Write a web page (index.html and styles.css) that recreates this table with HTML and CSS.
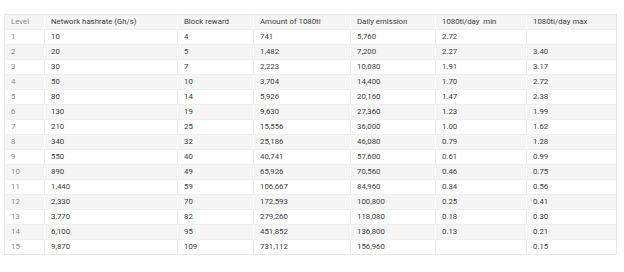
FILE: index.html
```html
<html>
<head>
	<title>Mining levels</title>
	<meta http-equiv="Content-Type" content="text/html; charset=UTF-8">
	<link rel="stylesheet" href="styles.css">
</head>
<body>
	<table class="levels">
		<colgroup>
			<col class="c-level">
			<col class="c-hash">
			<col class="c-reward">
			<col class="c-amount">
			<col class="c-daily">
			<col class="c-min">
			<col class="c-max">
		</colgroup>
		<thead>
			<tr>
				<th class="level">Level</th>
				<th>Network hashrate (Gh/s)</th>
				<th>Block reward</th>
				<th>Amount of 1080ti</th>
				<th>Daily emission</th>
				<th>1080ti/day&nbsp; min</th>
				<th>1080ti/day max</th>
			</tr>
		</thead>
		<tbody>
			<tr><td class="level">1</td><td>10</td><td>4</td><td>741</td><td>5,760</td><td>2.72</td><td></td></tr>
			<tr><td class="level">2</td><td>20</td><td>5</td><td>1,482</td><td>7,200</td><td>2.27</td><td>3.40</td></tr>
			<tr><td class="level">3</td><td>30</td><td>7</td><td>2,223</td><td>10,080</td><td>1.91</td><td>3.17</td></tr>
			<tr><td class="level">4</td><td>50</td><td>10</td><td>3,704</td><td>14,400</td><td>1.70</td><td>2.72</td></tr>
			<tr><td class="level">5</td><td>80</td><td>14</td><td>5,926</td><td>20,160</td><td>1.47</td><td>2.38</td></tr>
			<tr><td class="level">6</td><td>130</td><td>19</td><td>9,630</td><td>27,360</td><td>1.23</td><td>1.99</td></tr>
			<tr><td class="level">7</td><td>210</td><td>25</td><td>15,556</td><td>36,000</td><td>1.00</td><td>1.62</td></tr>
			<tr><td class="level">8</td><td>340</td><td>32</td><td>25,186</td><td>46,080</td><td>0.79</td><td>1.28</td></tr>
			<tr><td class="level">9</td><td>550</td><td>40</td><td>40,741</td><td>57,600</td><td>0.61</td><td>0.99</td></tr>
			<tr><td class="level">10</td><td>890</td><td>49</td><td>65,926</td><td>70,560</td><td>0.46</td><td>0.75</td></tr>
			<tr><td class="level">11</td><td>1,440</td><td>59</td><td>106,667</td><td>84,960</td><td>0.34</td><td>0.56</td></tr>
			<tr><td class="level">12</td><td>2,330</td><td>70</td><td>172,593</td><td>100,800</td><td>0.25</td><td>0.41</td></tr>
			<tr><td class="level">13</td><td>3,770</td><td>82</td><td>279,260</td><td>118,080</td><td>0.18</td><td>0.30</td></tr>
			<tr><td class="level">14</td><td>6,100</td><td>95</td><td>451,852</td><td>136,800</td><td>0.13</td><td>0.21</td></tr>
			<tr><td class="level">15</td><td>9,870</td><td>109</td><td>731,112</td><td>156,960</td><td></td><td>0.15</td></tr>
		</tbody>
	</table>
</body>
</html>
```

FILE: styles.css
```css
	body {
		background-color: #fff;
		margin: 0;
		padding: 14px 0 0 4px;
		font-family: Roboto, "Liberation Sans", sans-serif;
	}

	.levels {
		table-layout: fixed;
		width: 613px;
		border-collapse: separate;
		border-spacing: 0;
		border: 1px solid #e9e9e9;
		font-size: 7.8px;
		color: #3c3c3c;
	}

	.c-level { width: 40px; }
	.c-hash { width: 133px; }
	.c-reward { width: 76px; }
	.c-amount { width: 97px; }
	.c-daily { width: 85px; }
	.c-min { width: 91px; }
	.c-max { width: 89px; }

	.levels th, .levels td {
		height: 14px;
		line-height: 14px;
		padding: 0 0 0 6px;
		text-align: left;
		font-weight: normal;
		white-space: nowrap;
		overflow: hidden;
		border-right: 1px solid #ececec;
		border-bottom: 1px solid #f0f0f0;
		box-sizing: border-box;
	}

	.levels th:last-child, .levels td:last-child {
		border-right: none;
	}

	.levels tbody tr:last-child td {
		border-bottom: none;
	}

	.levels thead tr, .levels tbody tr:nth-child(even) {
		background-color: #f5f5f5;
	}

	.levels thead th, .levels tbody tr:nth-child(even) td {
		border-right-color: #fff;
	}

	.levels .level {
		color: #8c8c8c;
	}
```
